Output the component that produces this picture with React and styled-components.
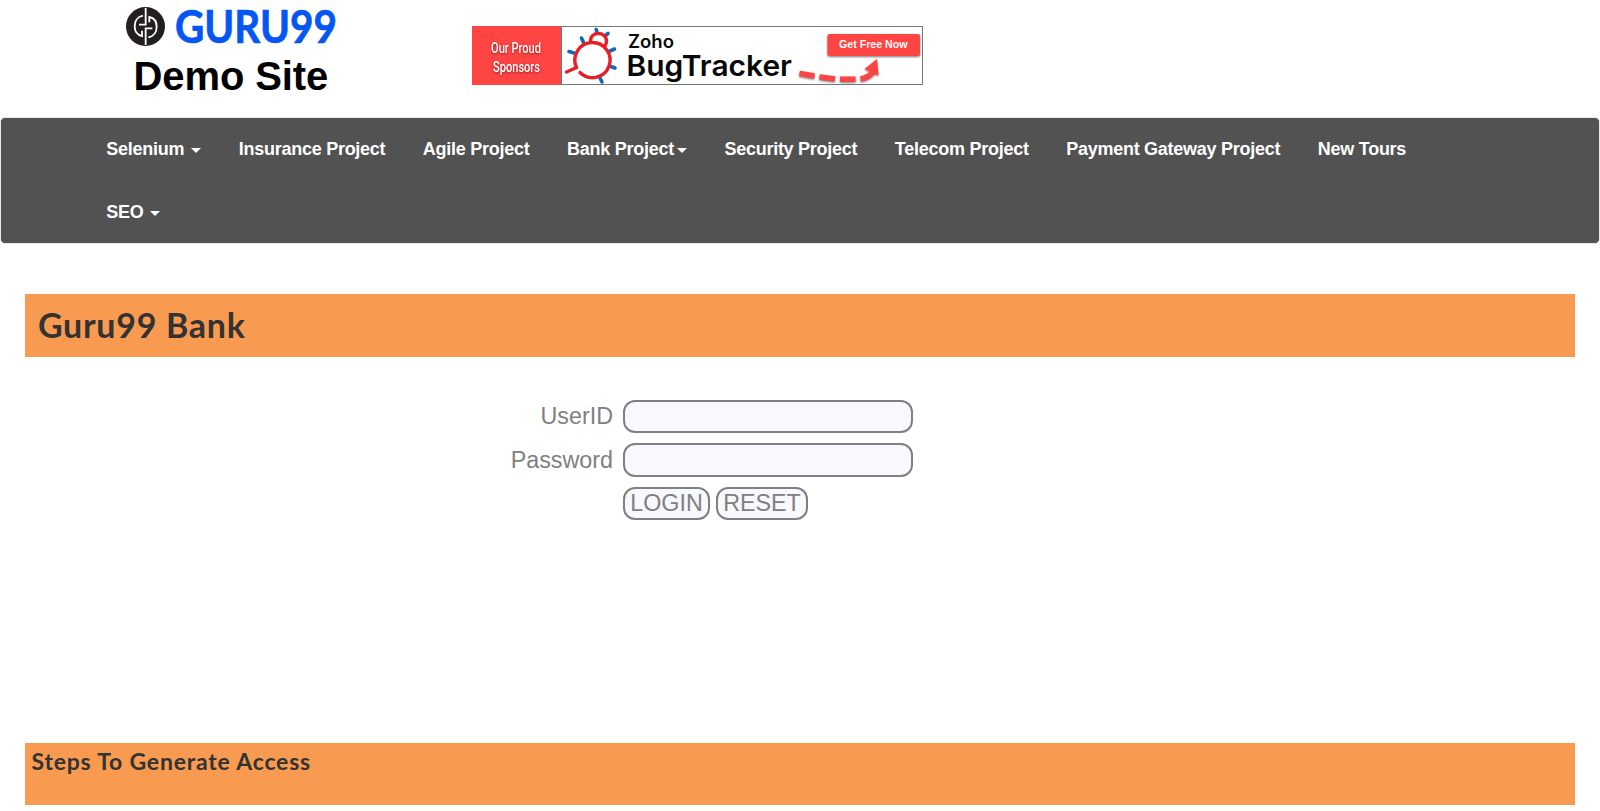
import React from "react";
import styled, { createGlobalStyle } from "styled-components";

const GlobalStyle = createGlobalStyle`
  * { box-sizing: border-box; }
  body { margin: 0; background: #fff; overflow: hidden; font-family: "Liberation Sans", Arial, sans-serif; }
`;

const Page = styled.div`
  width: 1600px;
  height: 811px;
  display: flex;
  flex-direction: column;
  overflow: hidden;
`;

const Header = styled.header`
  display: flex;
  height: 117px;
  flex: none;
  padding-left: 120px;
`;

const Brand = styled.div`
  width: 352px;
  display: flex;
  flex-direction: column;
`;

const LogoArt = styled.svg`
  display: block;
  width: 220px;
  height: 52px;
  overflow: visible;
`;

const SiteTitle = styled.h1`
  margin: 0;
  padding-left: 13.5px;
  font-size: 40px;
  line-height: 48px;
  font-weight: 700;
  color: #000;
  letter-spacing: -0.1px;
`;

const BannerArt = styled.svg`
  display: block;
  width: 452px;
  height: 60px;
  margin-top: 26px;
`;

const SponsorText = styled.g`
  fill: #fff;
  font: 500 15px Roboto, sans-serif;
  filter: drop-shadow(0 1px 1px #9a2020);
`;

const CallToAction = styled.g`
  filter: drop-shadow(0 1px 1px #777);
`;

const Nav = styled.nav`
  flex: none;
  height: 127px;
  background: #525252;
  border: 1px solid #e7e7e7;
  border-radius: 5px;
  padding: 0 86px 0 86.5px;
`;

const NavList = styled.ul`
  list-style: none;
  margin: 0;
  padding: 0;
  display: flex;
  flex-wrap: wrap;
  width: 1390px;
`;

const NavItem = styled.li`
  padding: 0 18.75px;
  height: 63px;
  line-height: 61px;
  font-size: 18px;
  font-weight: 700;
  letter-spacing: -0.26px;
  color: #fff;
  white-space: nowrap;
  display: flex;
  align-items: center;
`;

const Caret = styled.span`
  margin-left: ${(p) => (p.$tight ? 3 : 7)}px;
  margin-top: 1px;
  border-top: 5px solid #fff;
  border-left: 5px solid transparent;
  border-right: 5px solid transparent;
`;

const TitleBar = styled.h2`
  flex: none;
  margin: 50px 25px 0;
  height: 63px;
  padding-left: 13px;
  background: #f89b50;
  color: #333;
  font: 700 34px/62px Lato, sans-serif;
  letter-spacing: 0.7px;
`;

const LoginForm = styled.form`
  display: grid;
  grid-template-columns: 613px 290px;
  grid-template-rows: 33px 34px 33px;
  column-gap: 10px;
  row-gap: 10px;
  margin-top: 43px;
`;

const Label = styled.label`
  text-align: right;
  font-size: 23.3px;
  line-height: ${(p) => p.$line || 32}px;
  color: #808080;
`;

const Field = styled.input`
  width: 290px;
  height: 100%;
  border: 2px solid #808080;
  border-radius: 12px;
  background: #f8f8ff;
  outline: none;
`;

const Actions = styled.div`
  grid-column: 2;
  display: flex;
  gap: 6px;
`;

const Button = styled.button`
  width: ${(p) => p.$width}px;
  height: 33px;
  padding: 0;
  border: 2px solid #808080;
  border-radius: 12px;
  background: #f8f8ff;
  color: #808080;
  font: 23.3px/27px "Liberation Sans", Arial, sans-serif;
`;

const StepsBar = styled.h3`
  flex: none;
  margin: 223px 25px 0;
  height: 62px;
  padding-left: 6.5px;
  background: #f89b50;
  color: #333;
  font: 700 23px/37px Lato, sans-serif;
  letter-spacing: 0.8px;
`;

const HalfG = (props) => (
  <path
    d="M69 47C52 50 44 64 44 79C44 94 52 105 66 108V92M57 74H77V24"
    {...props}
  />
);

const Logo = () => (
  <LogoArt viewBox="120 0 220 52">
    <circle cx="145.5" cy="26.5" r="19.5" fill="#231f20" />
    <g transform="translate(120 0) scale(.3333)" fill="none" stroke="#fff" strokeWidth="5.5">
      <HalfG />
      <HalfG transform="rotate(180 77 79.5)" />
    </g>
    <text x="175" y="42.7" textLength="162" lengthAdjust="spacingAndGlyphs" fontFamily="Lato, sans-serif" fontWeight="700" fontSize="45.5" fill="#0556f3" stroke="#0556f3" strokeWidth="0.7" strokeLinejoin="round">GURU99</text>
  </LogoArt>
);

const Banner = () => (
  <BannerArt viewBox="472 26 452 60">
    <rect x="472.5" y="26.5" width="450" height="58" fill="#fff" stroke="#777" />
    <rect x="472" y="26" width="89" height="59" fill="#ff4444" />
    <path d="M561.5 26V85" stroke="#777" />
    <SponsorText>
      <text x="491" y="52.5" textLength="50" lengthAdjust="spacingAndGlyphs">Our Proud</text>
      <text x="493" y="71.5" textLength="47" lengthAdjust="spacingAndGlyphs">Sponsors</text>
    </SponsorText>
    <g fill="none" strokeLinecap="round">
      <path d="M596.2 29.5L597 32M608 33.5L605 36M581.5 38L583.5 42.5M569 51.5L574 53M610 51L614.5 49M611 66.5L615 68M600 78L602 82" stroke="#1767b4" strokeWidth="3.6" />
      <path d="M590.5 41C590.5 31 606 31 606.5 41Q606.5 44 604.5 47M566.5 72L576.5 67.5" stroke="#e51f25" strokeWidth="3.4" />
      <path d="M576.5 67.5A17.6 17.6 0 1 1 580 72.5" stroke="#e51f25" strokeWidth="3.4" />
    </g>
    <g fill="#080808" fontFamily="Inter, sans-serif">
      <text x="628" y="48" textLength="46" lengthAdjust="spacingAndGlyphs" fontSize="18" fontWeight="600">Zoho</text>
      <text x="626.5" y="76" textLength="165.5" lengthAdjust="spacingAndGlyphs" fontSize="29" fontWeight="600">BugTracker</text>
    </g>
    <CallToAction>
      <rect x="827.5" y="34" width="92.5" height="22" rx="2" fill="#ff4444" />
      <path d="M799.5 73.5L814.5 76M819.5 77L835 79M840 79.3H855.5M860.5 79Q868 78 873 72" fill="none" stroke="#ff4444" strokeWidth="5.5" />
      <path d="M877 59L864.5 69L878.5 75.5Z" fill="#ff4444" />
    </CallToAction>
    <text x="839" y="47.5" textLength="68.5" lengthAdjust="spacingAndGlyphs" fontFamily="Liberation Sans, sans-serif" fontWeight="700" fontSize="10.5" fill="#fff">Get Free Now</text>
  </BannerArt>
);

const links = [
  { label: "Selenium", caret: true },
  { label: "Insurance Project" },
  { label: "Agile Project" },
  { label: "Bank Project", caret: true, tight: true },
  { label: "Security Project" },
  { label: "Telecom Project" },
  { label: "Payment Gateway Project" },
  { label: "New Tours" },
  { label: "SEO", caret: true },
];

export default function App() {
  return (
    <Page>
      <GlobalStyle />
      <Header>
        <Brand>
          <Logo />
          <SiteTitle>Demo Site</SiteTitle>
        </Brand>
        <Banner />
      </Header>
      <Nav>
        <NavList>
          {links.map((l) => (
            <NavItem key={l.label}>
              {l.label}
              {l.caret && <Caret $tight={l.tight} />}
            </NavItem>
          ))}
        </NavList>
      </Nav>
      <TitleBar>Guru99 Bank</TitleBar>
      <LoginForm>
        <Label htmlFor="uid">UserID</Label>
        <Field id="uid" type="text" />
        <Label htmlFor="pwd" $line={34}>Password</Label>
        <Field id="pwd" type="password" />
        <Actions>
          <Button type="button" $width={87}>LOGIN</Button>
          <Button type="reset" $width={92}>RESET</Button>
        </Actions>
      </LoginForm>
      <StepsBar>Steps To Generate Access</StepsBar>
    </Page>
  );
}
